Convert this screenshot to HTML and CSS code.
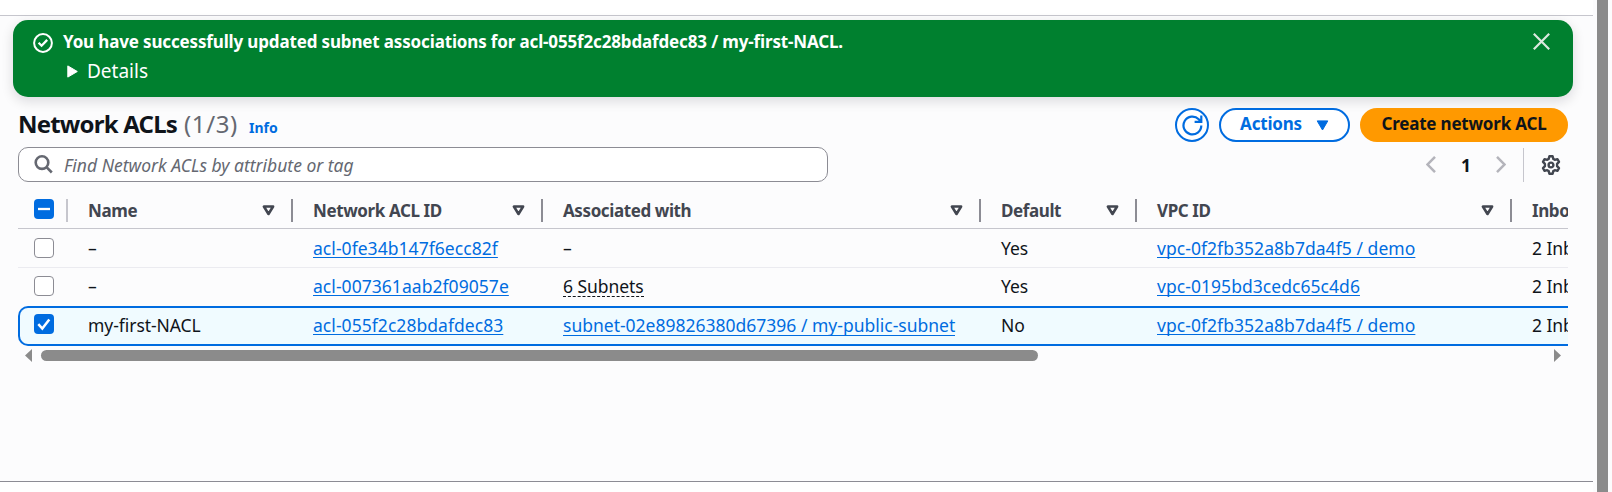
FILE: index.html
```html
<!DOCTYPE html>
<html lang="en">
<head>
<meta charset="utf-8">
<title>Network ACLs</title>
<link rel="stylesheet" href="styles.css">
</head>
<body>
<div class="app">
  <div class="topbar"></div>
  <main class="panel">
    <section class="flash">
      <svg class="flash-icon" viewBox="0 0 20 20" fill="none" stroke="#fff" stroke-width="2"><circle cx="10" cy="10" r="8.9"/><path d="M5.6 9.7l3 3 5.6-5.8" stroke-width="2.3"/></svg>
      <div class="flash-body">
        <div class="flash-title">You have successfully updated subnet associations for acl-055f2c28bdafdec83 / my-first-NACL.</div>
        <div class="flash-details">
          <svg class="caret" viewBox="0 0 11 13"><path d="M.8.9v11.2L10.300 6.500z" fill="#fff" stroke="#fff" stroke-linejoin="round"/></svg>
          <span>Details</span>
        </div>
      </div>
      <svg class="close" viewBox="0 0 17 17" fill="none" stroke="#dbe9df" stroke-width="2.2"><path d="M.8.8l15.400 15.400M16.200.8L.8 16.200"/></svg>
    </section>

    <header class="heading">
      <h1>Network ACLs</h1>
      <span class="count">(1/3)</span>
      <a class="info">Info</a>
      <div class="actions">
        <button class="btn btn-round"><svg class="refresh" viewBox="0 0 21 21" fill="none" stroke="#006ce0" stroke-width="2.2"><path d="M19.300 10.500a8.900 8.900 0 1 1-2.600-6.300l2.600 2.600M19.300.6v6.200h-6.700"/></svg></button>
        <button class="btn btn-menu"><span>Actions</span><svg class="arrow" viewBox="0 0 13 11"><path d="M1.200.9h10.600L6.500 10z" fill="#006ce0" stroke="#006ce0" stroke-linejoin="round"/></svg></button>
        <button class="btn btn-primary"><span>Create network ACL</span></button>
      </div>
    </header>

    <div class="tools">
      <div class="search">
        <svg class="lens" viewBox="0 0 19 19" fill="none" stroke="#656871" stroke-width="2.600"><circle cx="8" cy="7.600" r="6.300"/><path d="M12.500 12.200l5.300 5.300"/></svg>
        <span>Find Network ACLs by attribute or tag</span>
      </div>
      <nav class="pager">
        <svg class="chevron" viewBox="0 0 10 17" fill="none" stroke="#b4b4bb" stroke-width="2.500"><path d="M9 .9L1.600 8.500 9 16.100"/></svg>
        <span class="page">1</span>
        <svg class="chevron" viewBox="0 0 10 17" fill="none" stroke="#b4b4bb" stroke-width="2.500"><path d="M1 .9l7.400 7.600L1 16.100"/></svg>
        <span class="rule"></span>
        <svg class="gear" viewBox="0 0 20 20" fill="none" stroke="#424650" stroke-width="2.400" stroke-linejoin="round"><path d="M8.400 1.300h3.200l.7 2.600 1.500.9 2.600-.7 1.600 2.800-1.900 1.900v2.400l1.900 1.900-1.600 2.800-2.600-.7-1.500.9-.7 2.600H8.400l-.7-2.600-1.500-.9-2.600.7L2 13.100l1.900-1.900V8.800L2 6.900l1.600-2.800 2.600.7 1.500-.9z"/><circle cx="10" cy="10" r="2.400"/></svg>
      </nav>
    </div>

    <div class="table">
      <div class="row head">
        <div class="cell sel"><span class="box on"><svg viewBox="0 0 20 20"><path d="M4 10h12" stroke="#fff" stroke-width="2.300"/></svg></span></div>
        <div class="cell"><span>Name</span><svg class="sort" viewBox="0 0 13 11"><path d="M1.900 1.500h9.200L6.500 9z"/></svg></div>
        <div class="cell"><span>Network ACL ID</span><svg class="sort" viewBox="0 0 13 11"><path d="M1.900 1.500h9.200L6.500 9z"/></svg></div>
        <div class="cell"><span>Associated with</span><svg class="sort" viewBox="0 0 13 11"><path d="M1.900 1.500h9.200L6.500 9z"/></svg></div>
        <div class="cell"><span>Default</span><svg class="sort" viewBox="0 0 13 11"><path d="M1.900 1.500h9.200L6.500 9z"/></svg></div>
        <div class="cell"><span>VPC ID</span><svg class="sort" viewBox="0 0 13 11"><path d="M1.900 1.500h9.200L6.500 9z"/></svg></div>
        <div class="cell"><span>Inbo</span></div>
      </div>
      <div class="row first">
        <div class="cell sel"><span class="box"></span></div>
        <div class="cell">–</div>
        <div class="cell"><a class="id">acl-0fe34b147f6ecc82f</a></div>
        <div class="cell">–</div>
        <div class="cell">Yes</div>
        <div class="cell"><a class="id">vpc-0f2fb352a8b7da4f5 / demo</a></div>
        <div class="cell">2 Inb</div>
      </div>
      <div class="row second">
        <div class="cell sel"><span class="box"></span></div>
        <div class="cell">–</div>
        <div class="cell"><a class="id">acl-007361aab2f09057e</a></div>
        <div class="cell"><span class="hint">6 Subnets</span></div>
        <div class="cell">Yes</div>
        <div class="cell"><a class="id">vpc-0195bd3cedc65c4d6</a></div>
        <div class="cell">2 Inb</div>
      </div>
      <div class="row selected">
        <div class="cell sel"><span class="box on"><svg viewBox="0 0 20 20"><path d="M4.300 10.200l4 4.300 7-9" fill="none" stroke="#fff" stroke-width="2.500"/></svg></span></div>
        <div class="cell">my-first-NACL</div>
        <div class="cell"><a class="id">acl-055f2c28bdafdec83</a></div>
        <div class="cell"><a class="hint link">subnet-02e89826380d67396 / my-public-subnet</a></div>
        <div class="cell">No</div>
        <div class="cell"><a class="id">vpc-0f2fb352a8b7da4f5 / demo</a></div>
        <div class="cell">2 Inb</div>
      </div>
    </div>
    <div class="hscroll">
      <svg class="nudge" viewBox="0 0 7 13"><path d="M7 0v13L0 6.500z" fill="#8b8b8b"/></svg>
      <span class="thumb"></span>
      <svg class="nudge end" viewBox="0 0 7 13"><path d="M0 0v13l7-6.500z" fill="#8b8b8b"/></svg>
    </div>
  </main>
  <div class="vscroll"></div>
</div>
</body>
</html>
```
FILE: styles.css
```css
* { box-sizing: border-box; }
body { margin: 0; background: #fcfcfd; color: #0f141a; font: 17.5px/22px "Noto Sans", "Open Sans", sans-serif; letter-spacing: -0.05px; overflow: hidden; }
svg { display: block; flex: none; }
h1 { margin: 0; }
.app { display: grid; grid-template: 16px 466px 10px / 1593px 4px 11px; height: 492px; }
.topbar { background: #fff; border-bottom: 1px solid #c6c6cd; grid-area: 1 / 1; }
.panel { grid-area: 2 / 1; border-bottom: 1px solid #8c8c94; padding: 4px 25px 0 18px; }
.app::after { content: ""; grid-area: 3 / 1; background: #fff; }
.vscroll { grid-area: 1 / 3 / 4 / 4; background: #8b8b8b; }

.flash { display: flex; height: 77px; margin: 0 -5px; padding: 11px 23px 0 20px; border-radius: 15px; background: #00802f; color: #fff; box-shadow: 0 4px 12px 1px rgba(0, 7, 22, .12); }
.flash-icon { width: 20px; height: 20px; margin-top: 2px; }
.flash-body { flex: 1; margin-left: 10px; white-space: nowrap; }
.flash-title { font-size: 17px; font-weight: 700; letter-spacing: -0.15px; }
.flash-details { display: flex; align-items: center; gap: 9px; margin: 7px 0 0 4px; font-size: 19px; letter-spacing: 0; }
.caret { width: 11px; height: 13px; }
.close { width: 17px; height: 17px; margin: 2px 0 0; }

.heading { display: flex; height: 34px; margin-top: 11px; white-space: nowrap; }
.heading h1 { font-size: 24px; line-height: 32px; letter-spacing: -0.8px; width: 166px; }
.count { font-size: 24px; line-height: 32px; color: #656871; width: 65px; letter-spacing: 0.6px; }
.info { font-size: 14px; line-height: 40px; font-weight: 700; color: #006ce0; letter-spacing: 0; }
.actions { display: flex; gap: 10px; margin-left: auto; }
.btn { display: flex; align-items: center; justify-content: center; height: 34px; padding: 0; border: 2px solid #006ce0; border-radius: 17px; background: #fff; color: #006ce0; font: 700 17px/22px "Noto Sans", sans-serif; letter-spacing: -0.2px; }
.btn span { margin-top: -2px; }
.btn-round { width: 34px; }
.refresh { width: 21px; height: 21px; }
.btn-menu { width: 131px; gap: 14px; }
.arrow { width: 13px; height: 11px; }
.btn-primary { width: 208px; background: #ff9900; border-color: #ff9900; color: #0f141a; }

.tools { display: flex; justify-content: space-between; margin-top: 5px; height: 35px; }
.search { display: flex; align-items: center; width: 810px; gap: 11px; padding-left: 15px; border: 1px solid #8c8c94; border-radius: 10px; background: #fff; color: #656871; font-style: italic; letter-spacing: 0; }
.lens { width: 19px; height: 19px; }
.pager { display: flex; align-items: center; padding-right: 7px; }
.chevron { width: 10px; height: 17px; }
.page { width: 60px; text-align: center; font-weight: 700; }
.rule { width: 1px; height: 34px; background: #c6c6cd; margin: 0 17px; }
.gear { width: 20px; height: 20px; }

.table { margin-top: 9px; overflow: hidden; }
.row { display: grid; grid-template-columns: 50px 225px 250px 438px 156px 375px 56px; border-bottom: 1px solid #ebebf0; }
.cell { overflow: hidden; white-space: nowrap; padding: 8px 0 0 20px; }
.cell.sel { padding: 9px 0 0 16px; }
.head { height: 38px; border-color: #c6c6cd; color: #424650; font-size: 17px; font-weight: 700; letter-spacing: -0.4px; }
.head .cell { display: flex; align-items: center; justify-content: space-between; height: 23px; margin-top: 8px; padding: 0 16px 0 20px; border-right: 2px solid #8c8c94; }
.head .cell:last-child { border: 0; padding-right: 0; }
.head .cell.sel { align-items: flex-start; padding: 0 0 0 16px; border-color: #c6c6cd; }
.sort { width: 13px; height: 11px; fill: none; stroke: #424650; stroke-width: 2.6; stroke-linejoin: round; }
.first { height: 39px; }
.second { height: 38px; border: 0; }
.second .cell { padding-top: 7px; }
.second .cell.sel { padding-top: 8px; }
.selected { height: 40px; border: 2px solid #006ce0; border-right: 0; border-radius: 10px 0 0 10px; background: #f0fbff; grid-template-columns: 48px 225px 250px 438px 156px 375px 56px; }
.selected .cell { padding-top: 6px; }
.selected .cell.sel { padding: 6px 0 0 14px; }
.box { display: block; width: 20px; height: 20px; border: 1px solid #8c8c94; border-radius: 4px; background: #fff; }
.box.on { border: 0; background: #006ce0; }
.id, .link { color: #006ce0; }
.id { letter-spacing: 0.05px; text-decoration: underline; text-decoration-thickness: 1px; text-underline-offset: 2px; text-decoration-skip-ink: none; }
.hint { display: inline-block; border-bottom: 1px dashed #0f141a; height: 22px; vertical-align: top; }
.hint.link { border-bottom: 1px solid #006ce0; letter-spacing: 0; }

.hscroll { display: flex; align-items: center; height: 13px; margin: 3px 7px 0; }
.nudge { width: 7px; height: 13px; }
.thumb { width: 997px; height: 11px; margin-left: 9px; border-radius: 6px; background: #8b8b8b; }
.nudge.end { margin-left: auto; }
```
